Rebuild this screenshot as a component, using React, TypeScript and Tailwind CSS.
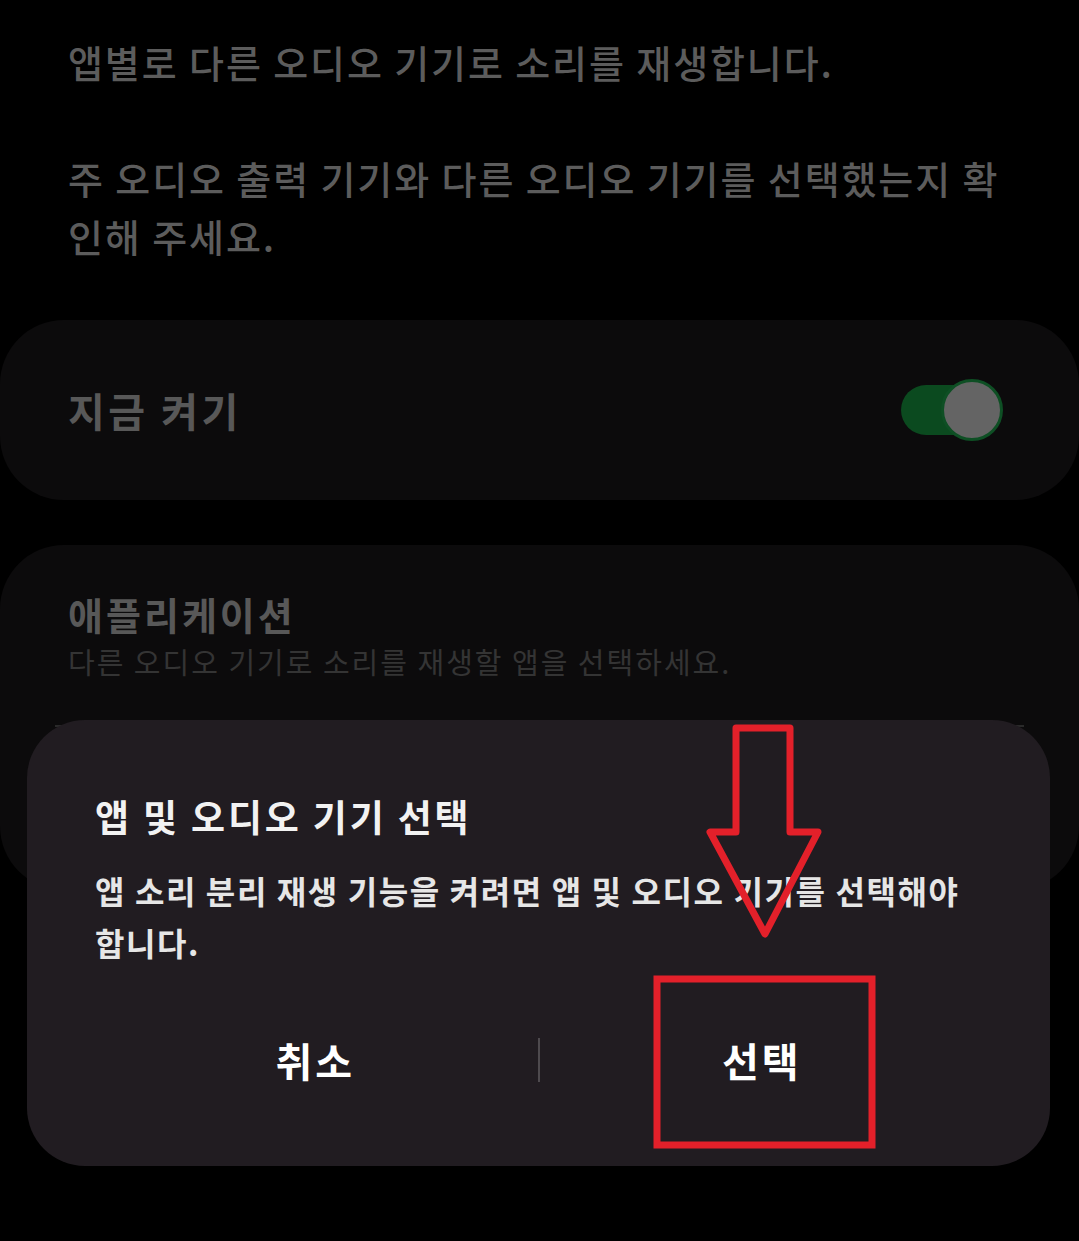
import React from "react";

const font = { fontFamily: '"Noto Sans CJK KR", "Noto Sans", sans-serif' };

export default function App() {
  return (
    <div
      className="relative h-[1241px] w-[1079px] overflow-hidden bg-black"
      style={font}
    >
      {/* Description */}
      <div className="px-[68px] pt-[33px] text-[38px] leading-[58px] font-medium text-[#5c5c5c] tracking-[1.9px]">
        <p>앱별로 다른 오디오 기기로 소리를 재생합니다.</p>
        <p className="h-[58px]"></p>
        <p>
          주 오디오 출력 기기와 다른 오디오 기기를 선택했는지 확
          <br />
          인해 주세요.
        </p>
      </div>

      {/* Card 1 */}
      <div className="mt-[55px] flex h-[180px] items-center justify-between rounded-[64px] bg-[#0c0b0c] pl-[68px] pr-[76px]">
        <span className="text-[40px] font-bold tracking-[3.5px] text-[#585858]">지금 켜기</span>
        <div className="relative flex h-[62px] w-[102px] items-center">
          <div className="h-[50px] w-[90px] rounded-full bg-[#0b4a1f]" />
          <div className="absolute right-0 top-0 h-[62px] w-[62px] rounded-full border-[3px] border-[#0e4f24] bg-[#646464]" />
        </div>
      </div>

      {/* Card 2 */}
      <div className="mt-[45px] h-[345px] rounded-[64px] bg-[#0c0b0c] px-[55px] pt-[42px]">
        <div className="px-[13px]">
          <div className="text-[38px] font-semibold leading-[54px] tracking-[3px] text-[#585858]">
            애플리케이션
          </div>
          <div className="mt-[-3px] text-[29px] leading-[46px] tracking-[2px] text-[#343434]">
            다른 오디오 기기로 소리를 재생할 앱을 선택하세요.
          </div>
        </div>
        <div className="mt-[41px] h-[2px] bg-[#2a2a2a]" />
      </div>

      {/* Dialog */}
      <div className="absolute left-[27px] top-[720px] flex h-[446px] w-[1023px] flex-col rounded-[58px] bg-[#211c21] pt-[72px]">
        <div className="px-[68px] text-[37px] font-bold leading-[48px] tracking-[2.8px] text-[#f2f2f2]">
          앱 및 오디오 기기 선택
        </div>
        <div className="mt-[24px] px-[68px] text-[32px] font-semibold leading-[52px] tracking-[1.6px] text-[#e6e6e6]">
          앱 소리 분리 재생 기능을 켜려면 앱 및 오디오 기기를 선택해야
          <br />
          합니다.
        </div>
        <div className="mt-[47px] flex h-[90px] items-center px-[66px]">
          <div className="flex flex-1 items-center justify-center text-[40px] font-bold tracking-[3px] text-white">
            취소
          </div>
          <div className="h-[44px] w-[2px] bg-[#4e4a4e]" />
          <div className="flex flex-1 items-center justify-center text-[40px] font-bold tracking-[3px] text-white">
            선택
          </div>
        </div>
      </div>

      {/* Red annotation arrow */}
      <svg
        className="absolute left-0 top-0"
        width="1079"
        height="1241"
        viewBox="0 0 1079 1241"
      >
        <polygon
          points="736,728 790,728 790,832 818,832 765,934 710,832 736,832"
          fill="none"
          stroke="#e3202a"
          strokeWidth="7"
          strokeLinejoin="round"
        />
        <rect
          x="657"
          y="979"
          width="215"
          height="166"
          fill="none"
          stroke="#e3202a"
          strokeWidth="7"
        />
      </svg>
    </div>
  );
}
